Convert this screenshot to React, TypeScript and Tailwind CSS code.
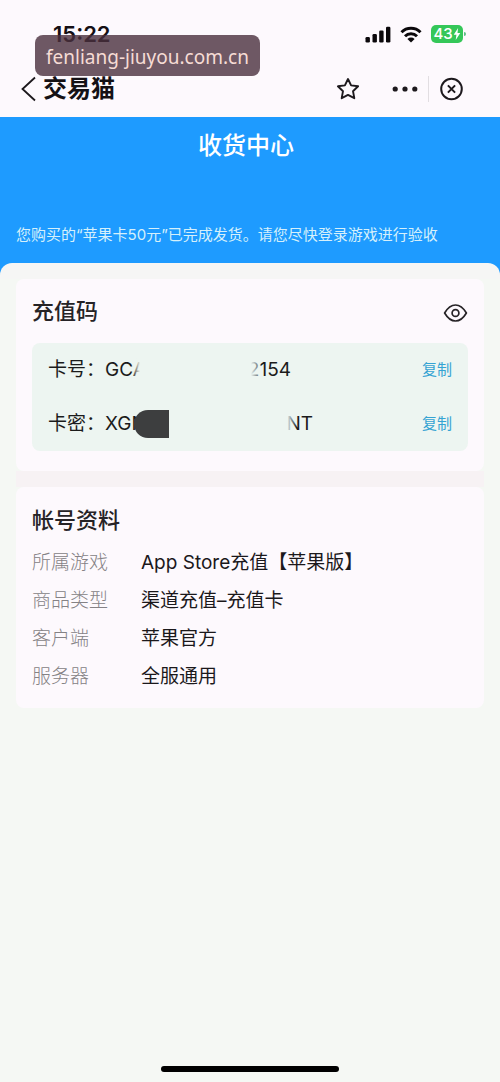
import type { ReactNode } from "react";

const account = [
  { label: "所属游戏", value: "App Store充值【苹果版】" },
  { label: "商品类型", value: "渠道充值–充值卡" },
  { label: "客户端", value: "苹果官方" },
  { label: "服务器", value: "全服通用" },
];

function StatusBar() {
  return (
    <div className="flex h-[60px] items-center justify-between pt-2 pr-[34px] pl-[53px]">
      <span className="text-[22px] leading-6 font-semibold text-[#151015]">15:22</span>
      <div className="flex items-center gap-[9px]">
        <svg width="27" height="17" viewBox="0 0 27 17" fill="#0b080b" aria-hidden="true">
          <rect x="1.5" y="11" width="4.4" height="5.5" rx="1.3" />
          <rect x="8.5" y="8" width="4.4" height="8.5" rx="1.3" />
          <rect x="15.2" y="4.5" width="4.4" height="12" rx="1.3" />
          <rect x="22" y="0.8" width="4.4" height="15.7" rx="1.3" />
        </svg>
        <svg width="22" height="17" viewBox="0 0 22 17" aria-hidden="true">
          <g fill="none" stroke="#0b080b" strokeWidth="3">
            <path d="M1.5 6.2a13.6 13.6 0 0 1 19 0" />
            <path d="M5 10.2a8.6 8.6 0 0 1 12 0" />
          </g>
          <path d="M11 16.5 7.4 12.9a5.2 5.2 0 0 1 7.2 0Z" fill="#0b080b" />
        </svg>
        <div className="flex items-center gap-px">
          <div className="flex h-[18px] w-8 items-center justify-center rounded-[5px] bg-[#35c759] text-[15px] leading-[18px] font-medium text-white">
            43
            <svg width="8" height="12" viewBox="0 0 7 12" fill="#fff" aria-hidden="true">
              <path d="M4.6 0 0.2 6.8h2.7L2.2 12 6.8 4.9H4Z" />
            </svg>
          </div>
          <span className="h-1 w-0.5 rounded-r-sm bg-[#5cbf83]" />
        </div>
      </div>
    </div>
  );
}

function NavBar() {
  return (
    <div className="flex h-[57px] items-center pr-9 pl-5">
      <button type="button" aria-label="返回" className="mr-1.5">
        <svg width="17" height="26" viewBox="0 0 17 26" fill="none" stroke="#1c181c" strokeWidth="1.8">
          <path d="M15 1.5 2.5 13 15 24.5" />
        </svg>
      </button>
      <h1 className="flex-1 text-2xl leading-8 font-bold text-[#151115]">交易猫</h1>
      <button type="button" aria-label="收藏" className="mr-8">
        <svg width="24" height="24" viewBox="0 0 24 24" fill="none" stroke="#1d191d" strokeWidth="1.9" strokeLinejoin="round">
          <path d="m12 2 3.1 6.4 7 .9-5.1 4.9 1.3 7L12 17.9l-6.3 3.3 1.3-7L1.9 9.3l7-.9Z" />
        </svg>
      </button>
      <button type="button" aria-label="更多" className="mr-2.5">
        <svg width="26" height="6" viewBox="0 0 26 6" fill="#1d191d">
          <circle cx="3.2" cy="3" r="2.6" />
          <circle cx="13" cy="3" r="2.6" />
          <circle cx="22.8" cy="3" r="2.6" />
        </svg>
      </button>
      <span className="mr-2.5 h-[26px] w-px bg-[#e2dee2]" />
      <button type="button" aria-label="关闭">
        <svg width="25" height="24" viewBox="0 0 24 24" fill="none" stroke="#1d191d" strokeWidth="2">
          <circle cx="12" cy="12" r="10.3" />
          <path d="m8.4 8.4 7.2 7.2M15.6 8.4l-7.2 7.2" />
        </svg>
      </button>
    </div>
  );
}

function CodeRow({ label, children }: { label: string; children: ReactNode }) {
  return (
    <div className="flex h-[54px] items-center justify-between">
      <div className="flex items-center whitespace-pre text-[19px] leading-7 text-[#1b1b1b]">
        <span className="w-[57px]">{label}：</span>
        {children}
      </div>
      <button type="button" className="text-[15px] leading-6 text-[#35a3d3]">
        复制
      </button>
    </div>
  );
}

export default function App() {
  return (
    <div className="relative flex min-h-screen flex-col bg-[#f5f8f4] font-['Inter','Noto_Sans_CJK_SC',sans-serif]">
      <header className="bg-[#fdf9fd]">
        <StatusBar />
        <NavBar />
      </header>
      <div className="absolute top-[35px] left-[35px] rounded-lg bg-[#4a2f3d]/80 px-[11px] pt-2 pb-1 font-['Noto_Sans',sans-serif] text-[19px] leading-[29px] text-[#f6dcd5]">
        fenliang-jiuyou.com.cn
      </div>

      <section className="bg-[#1e9bff] text-white">
        <h2 className="pt-3 pr-2 text-center text-2xl leading-[34px] font-medium">收货中心</h2>
        <p className="px-4 pt-[60px] pb-4 text-[15px] leading-6 text-[#d5f0fb]">
          您购买的“苹果卡50元”已完成发货。请您尽快登录游戏进行验收
        </p>
        <div className="h-4 rounded-t-xl bg-[#f6f6f5]" />
      </section>

      <main className="flex flex-col px-4">
        <section className="rounded-lg bg-[#fdf9fd] px-4 pb-5">
          <div className="flex h-16 items-center justify-between">
            <h3 className="text-[22px] leading-8 font-medium text-[#262326]">充值码</h3>
            <button type="button" aria-label="显示充值码" className="pt-1">
              <svg width="25" height="20" viewBox="0 0 25 20" fill="none" stroke="#262326" strokeWidth="1.7">
                <path d="M1.6 10C4.8 4.6 8.3 2 12.5 2s7.7 2.6 10.9 8c-3.2 5.4-6.7 8-10.9 8S4.8 15.4 1.6 10Z" strokeLinejoin="round" />
                <circle cx="12.5" cy="10" r="3.4" />
              </svg>
            </button>
          </div>
          <div className="rounded-lg bg-[#edf5f1] px-4">
            <CodeRow label="卡号">
              <span className="relative w-[35px] overflow-hidden">
                GCA
                <span className="absolute top-0 right-0 h-7 w-2 bg-linear-to-r from-[#edf5f1]/0 to-[#edf5f1]" />
              </span>
              <span className="relative ml-[111px] flex w-10 justify-end overflow-hidden">
                2154
                <span className="absolute top-0 left-0 h-7 w-2.5 bg-linear-to-r from-[#edf5f1] to-[#edf5f1]/20" />
              </span>
            </CodeRow>
            <CodeRow label="卡密">
              <span className="relative w-[64px] overflow-hidden">
                XGN
                <span className="absolute top-0 right-0 h-7 w-[35px] rounded-l-full bg-[#3d3e3f]" />
              </span>
              <span className="relative ml-[118px] flex w-[26px] justify-end overflow-hidden">
                NT
                <span className="absolute top-0 left-0 h-7 w-2.5 bg-linear-to-r from-[#edf5f1] to-[#edf5f1]/0" />
              </span>
            </CodeRow>
          </div>
        </section>

        <div className="h-4 bg-[#f7f2f4]" />

        <section className="rounded-lg bg-[#fdf9fd] px-4 pt-[17px] pb-3">
          <h3 className="mb-2 text-[22px] leading-8 font-medium text-[#262326]">帐号资料</h3>
          <dl className="text-[19px] leading-[38px]">
            {account.map((row) => (
              <div key={row.label} className="flex">
                <dt className="w-[109px] font-light text-[#858285]">{row.label}</dt>
                <dd className="text-[#1b181b]">{row.value}</dd>
              </div>
            ))}
          </dl>
        </section>
      </main>

      <footer className="mt-auto flex justify-center pb-2.5">
        <div className="h-1.5 w-[178px] rounded-full bg-black" />
      </footer>
    </div>
  );
}
